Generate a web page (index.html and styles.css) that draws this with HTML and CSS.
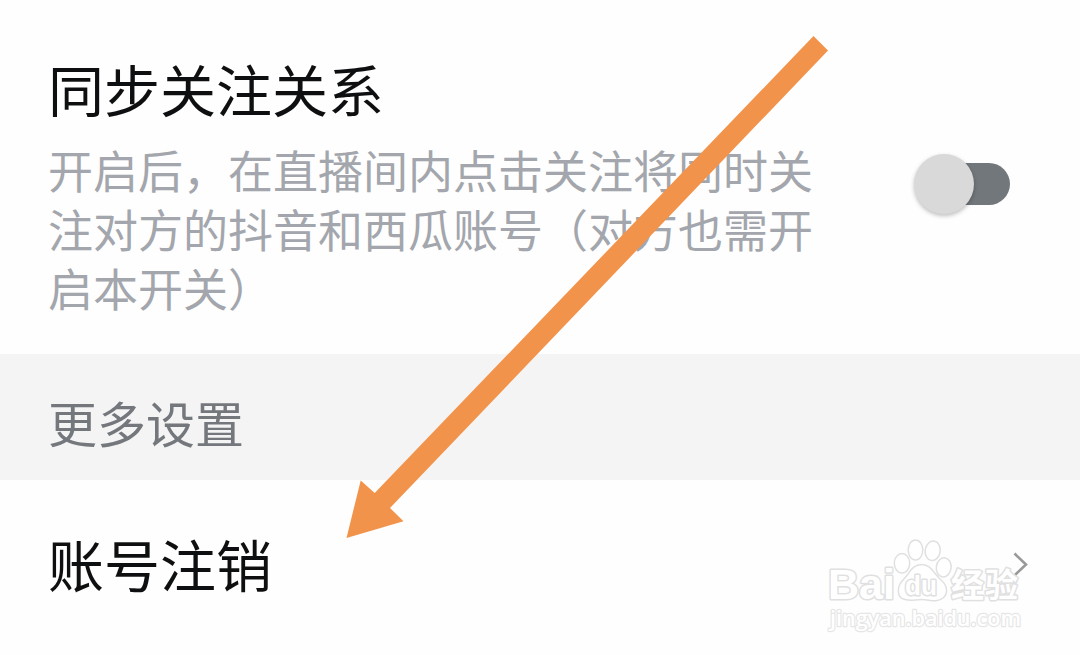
FILE: index.html
```html
<!DOCTYPE html>
<html lang="zh-CN">
<head>
    <meta charset="UTF-8">
    <meta name="viewport" content="width=device-width, initial-scale=1.0">
    <title>设置</title>
    <link rel="stylesheet" href="styles.css">
</head>
<body>
    <div class="page">
        <div class="setting">
            <div class="setting-text">
                <h2>同步关注关系</h2>
                <p>开启后，在直播间内点击关注将同时关注对方的抖音和西瓜账号（对方也需开启本开关）</p>
            </div>
            <div class="switch">
                <div class="switch-thumb"></div>
            </div>
        </div>

        <div class="section-title">更多设置</div>

        <div class="link-row">
            <h2>账号注销</h2>
            <svg class="chevron" width="16" height="26" viewBox="0 0 16 26">
                <path d="M2.5 2.5 L14 13.5 L3 24"/>
            </svg>
        </div>

        <!-- watermark -->
        <svg class="watermark" width="220" height="115" viewBox="820 535 220 115">
            <text class="logo-text" x="828" y="599" font-size="43" textLength="67" lengthAdjust="spacingAndGlyphs">Bai</text>
            <ellipse cx="902" cy="563.3" rx="7.7" ry="9.8"/>
            <ellipse cx="915.5" cy="550" rx="7.3" ry="10"/>
            <ellipse cx="932.7" cy="550.8" rx="7.5" ry="9.8" transform="rotate(8 932.7 550.8)"/>
            <ellipse cx="943.7" cy="567.4" rx="7.4" ry="9.6" transform="rotate(8 943.7 567.4)"/>
            <path d="M922 564.5 C931 564.5 934 574 941 580 C948 586 948 594 943 598 C936 603 930 599.5 922 599.5 C914 599.5 909 602 902 598.5 C897 595 897 586 903 580 C910 573 912 564.5 922 564.5 Z"/>
            <text class="logo-du" x="905" y="594.5" font-size="27" textLength="32" lengthAdjust="spacingAndGlyphs">du</text>
            <text class="logo-cn" x="951" y="596.5" font-size="33" textLength="67">经验</text>
            <text class="logo-url" x="830" y="625.5" font-size="22" textLength="191" lengthAdjust="spacingAndGlyphs">jingyan.baidu.com</text>
        </svg>

        <svg class="arrow" width="1080" height="655" viewBox="0 0 1080 655">
            <polygon points="346.5,538 360.7,480.5 374.7,493 813.5,36 828,50.5 390,508 403.5,521.3"/>
        </svg>
    </div>
</body>
</html>
```

FILE: styles.css
```css
body {
    margin: 0;
    background: #fefefe;
    font-family: "Noto Sans CJK SC", sans-serif;
}
.page {
    position: relative;
    height: 655px;
    overflow: hidden;
}
h2 {
    margin: 0;
    font-size: 56px;
    font-weight: 400;
    line-height: 80px;
    color: #0e0f10;
}
.setting {
    display: flex;
    justify-content: space-between;
    height: 354px;
    padding: 48px 70px 0 48px;
    box-sizing: border-box;
}
.setting-text {
    width: 770px;
}
.setting-text p {
    margin: 12px 0 0;
    font-size: 45px;
    line-height: 59px;
    color: #a3a6ac;
}
.switch {
    width: 90px;
    height: 42px;
    margin-top: 115px;
    border-radius: 21px;
    background: #72777c;
}
.switch-thumb {
    width: 60px;
    height: 60px;
    margin: -9px 0 0 -6px;
    border-radius: 50%;
    background: #d9d9d9;
    box-shadow: 0 2px 4px rgba(0, 0, 0, 0.25);
}
.section-title {
    height: 126px;
    padding: 5px 48px;
    box-sizing: border-box;
    background: #f4f4f4;
    font-size: 49px;
    line-height: 126px;
    color: #74777c;
}
.link-row {
    display: flex;
    align-items: center;
    justify-content: space-between;
    height: 168px;
    padding: 0 52px 0 48px;
}
.link-row h2 {
    padding-bottom: 2px;
}
.chevron path {
    fill: none;
    stroke: #999;
    stroke-width: 2.6;
}
.watermark {
    position: absolute;
    left: 820px;
    top: 535px;
    fill: #fff;
    stroke: #e0e0e0;
    stroke-width: 1.5;
}
.watermark text {
    paint-order: stroke;
    stroke-width: 3;
    stroke-linejoin: round;
}
.logo-text,
.logo-du {
    font-family: "Liberation Sans", Arial, sans-serif;
    font-weight: 700;
}
.logo-cn {
    font-weight: 700;
}
.watermark .logo-url {
    font-family: "Open Sans", sans-serif;
    font-weight: 600;
    stroke: #e6e6e6;
    stroke-width: 2.4;
}
.arrow {
    position: absolute;
    left: 0;
    top: 0;
    fill: #f2934b;
    pointer-events: none;
}
```
